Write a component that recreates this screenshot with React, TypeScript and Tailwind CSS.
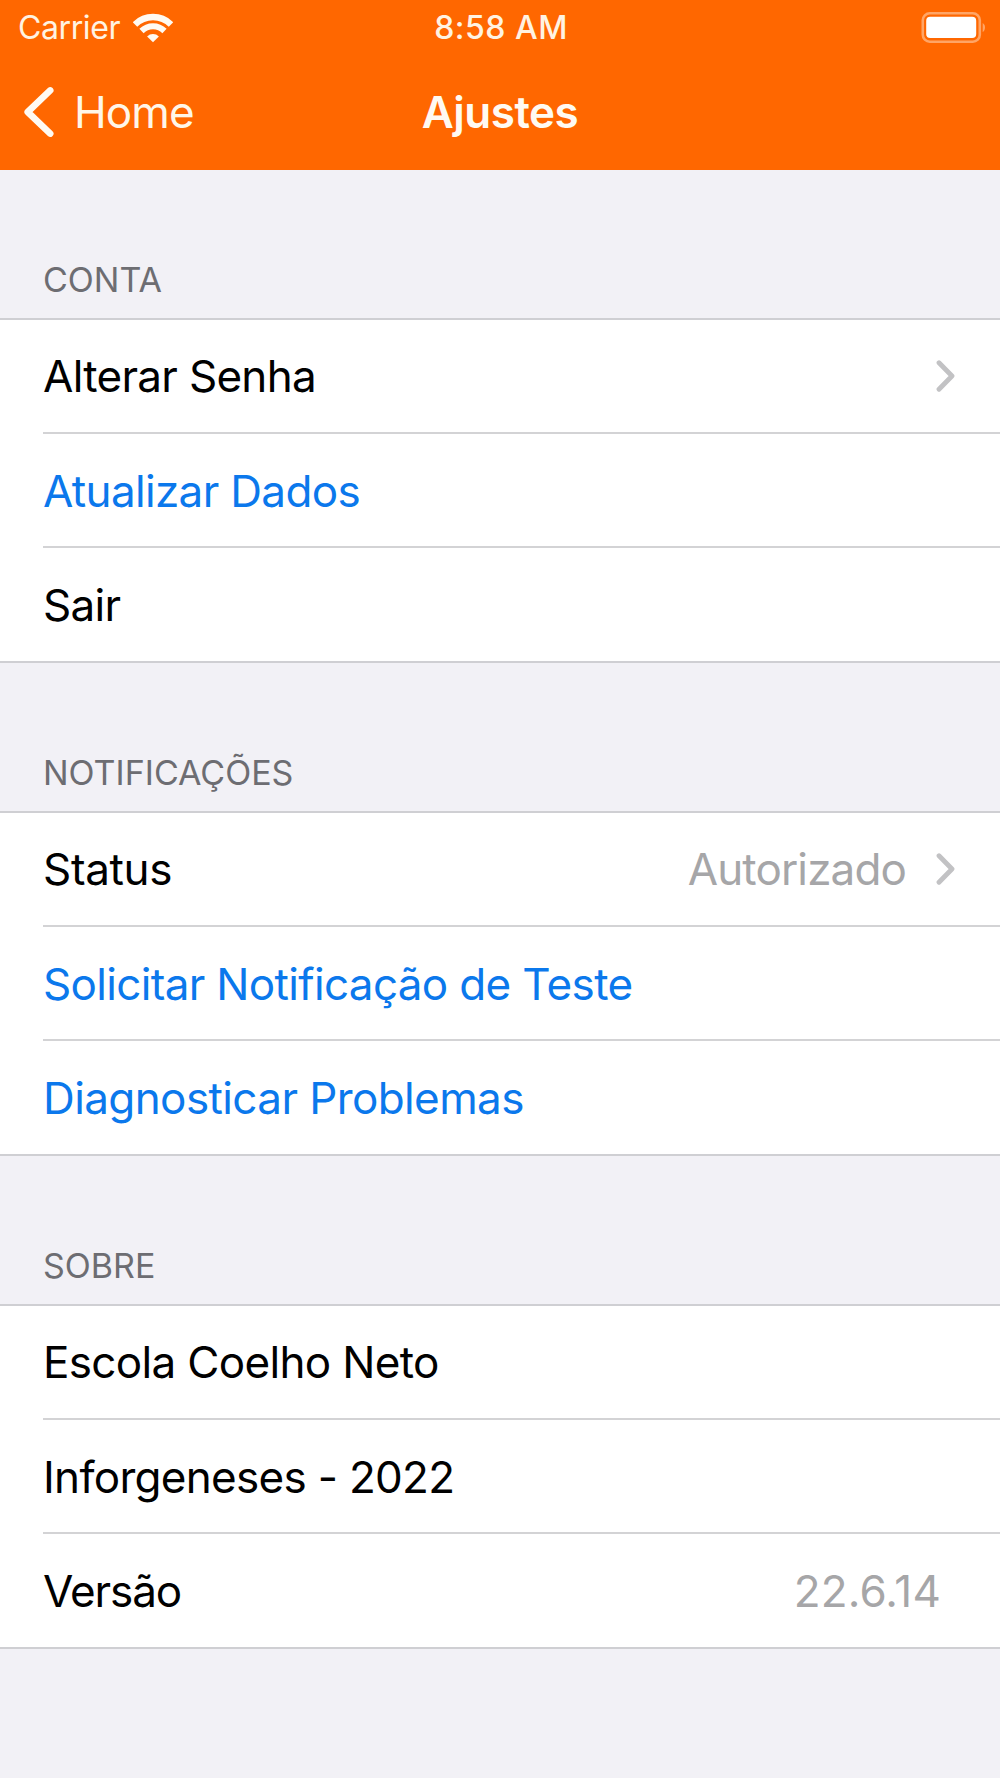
import clsx from 'clsx';

type Row = {
  label: string;
  value?: string;
  action?: boolean;
  chevron?: boolean;
  tracking?: string;
  valueClass?: string;
};

type Section = { title: string; rows: Row[] };

const SECTIONS: Section[] = [
  {
    title: 'CONTA',
    rows: [
      { label: 'Alterar Senha', chevron: true, tracking: 'tracking-[-0.7px]' },
      { label: 'Atualizar Dados', action: true },
      { label: 'Sair' },
    ],
  },
  {
    title: 'NOTIFICAÇÕES',
    rows: [
      {
        label: 'Status',
        value: 'Autorizado',
        chevron: true,
        tracking: 'tracking-[-0.35px]',
        valueClass: 'mr-[30px] tracking-[-0.87px]',
      },
      { label: 'Solicitar Notificação de Teste', action: true },
      { label: 'Diagnosticar Problemas', action: true, tracking: 'tracking-[-0.6px]' },
    ],
  },
  {
    title: 'SOBRE',
    rows: [
      { label: 'Escola Coelho Neto' },
      { label: 'Inforgeneses - 2022', tracking: 'tracking-[-0.7px]' },
      {
        label: 'Versão',
        value: '22.6.14',
        tracking: 'tracking-[-1.1px]',
        valueClass: 'mr-[15px] tracking-[0.15px]',
      },
    ],
  },
];

function WifiIcon() {
  return (
    <svg className="h-[30px] w-[40px]" viewBox="0 0 40 30" fill="none">
      <path d="M1.97 11.47A25.5 25.5 0 0 1 38.03 11.47" stroke="#fffaf2" strokeWidth="6.4" />
      <path d="M8.5 18A16.3 16.3 0 0 1 31.5 18" stroke="#fffaf2" strokeWidth="6" />
      <path d="M20 29.3L14.1 23.4A8.5 8.5 0 0 1 25.9 23.4Z" fill="#fffaf2" />
    </svg>
  );
}

function BatteryIcon() {
  return (
    <svg className="h-[31px] w-[65px]" viewBox="0 0 65 31" fill="none">
      <rect x="1.8" y="1.3" width="57" height="28.4" rx="7" stroke="#ffa566" strokeWidth="2.6" />
      <rect x="5.2" y="4.8" width="50" height="21.2" rx="4" fill="#fff" />
      <path d="M61.7 11C63.4 12.2 64 13.6 64 15.4S63.4 18.8 61.7 20Z" fill="#ffa566" />
    </svg>
  );
}

function Disclosure() {
  return (
    <svg className="h-8 w-5" viewBox="0 0 20 32" fill="none">
      <path
        d="M3 2.8L16 16L3 29.2"
        stroke="#c2c2c4"
        strokeWidth="4.8"
        strokeLinecap="round"
        strokeLinejoin="round"
      />
    </svg>
  );
}

function StatusBar() {
  return (
    <div className="grid h-[53px] grid-cols-3 items-center pt-[3px] text-[32px] leading-8 text-[#fff3e2]">
      <div className="flex items-center pl-[18px]">
        <span className="tracking-[-0.4px]">Carrier</span>
        <span className="ml-[13px]">
          <WifiIcon />
        </span>
      </div>
      <span className="pl-[2px] text-center font-medium tracking-[0.5px] whitespace-nowrap">8:58 AM</span>
      <div className="flex justify-end pr-[14px] pb-px">
        <BatteryIcon />
      </div>
    </div>
  );
}

function NavBar() {
  return (
    <div className="grid h-[117px] grid-cols-3 items-center text-[44px] leading-[44px]">
      <button className="flex items-center pl-[23px] text-left text-[#fff6e8]">
        <svg className="h-[52px] w-8" viewBox="0 0 32 52" fill="none">
          <path
            d="M27.2 4.4L4.7 26L27.2 47.6"
            stroke="#fffaf2"
            strokeWidth="6.6"
            strokeLinecap="round"
            strokeLinejoin="round"
          />
        </svg>
        <span className="ml-[19px] tracking-[-0.9px]">Home</span>
      </button>
      <h1 className="text-center font-semibold tracking-[-0.5px] text-[#fffaf2]">Ajustes</h1>
    </div>
  );
}

function SettingsRow({ row, first, last }: { row: Row; first: boolean; last: boolean }) {
  return (
    <li
      className={clsx(
        'flex items-center pr-11 text-[44px] leading-[44px]',
        last ? 'h-[113px]' : 'h-[114px] border-b-2 border-[#d3d3d5]',
        !first && 'pt-px'
      )}
    >
      <span
        className={clsx(
          'whitespace-nowrap',
          row.tracking ?? 'tracking-[-0.66px]',
          row.action ? 'text-[#0b78ec]' : 'text-black'
        )}
      >
        {row.label}
      </span>
      <div className="ml-auto flex items-center">
        {row.value && <span className={clsx('text-[#a6a6a8]', row.valueClass)}>{row.value}</span>}
        {row.chevron && <Disclosure />}
      </div>
    </li>
  );
}

export default function App() {
  return (
    <div className="min-h-screen w-full bg-[#f2f1f6] font-['Inter',sans-serif]">
      <header className="bg-[#ff6700]">
        <StatusBar />
        <NavBar />
      </header>

      <main>
        {SECTIONS.map((section) => (
          <section key={section.title}>
            <h2 className="flex h-[148px] items-end pb-[21px] pl-[43px] text-[34px] leading-[34px] text-[#6d6d72]">
              {section.title}
            </h2>
            <ul className="border-y-2 border-[#cfcfd3] bg-white pl-[43px]">
              {section.rows.map((row, i) => (
                <SettingsRow
                  key={row.label}
                  row={row}
                  first={i === 0}
                  last={i === section.rows.length - 1}
                />
              ))}
            </ul>
          </section>
        ))}
      </main>
    </div>
  );
}
